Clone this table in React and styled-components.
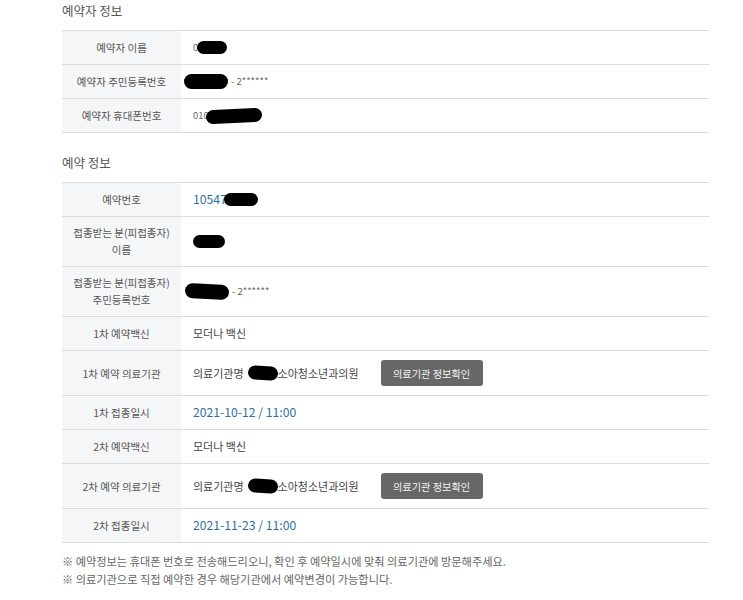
import React from "react";
import styled, { createGlobalStyle } from "styled-components";

const GlobalStyle = createGlobalStyle`
  body {
    margin: 0;
    background: #fff;
    font-family: "Noto Sans CJK KR", "Noto Sans", sans-serif;
  }
`;

const Page = styled.div`
  width: 647px;
  padding: 2px 0 0 62px;
  display: flex;
  flex-direction: column;
  gap: 21px;
`;

const Section = styled.section`
  display: flex;
  flex-direction: column;
`;

const Title = styled.h3`
  margin: 0 0 10px;
  font-size: 12.5px;
  line-height: 18px;
  font-weight: 400;
  color: #555;
`;

const Table = styled.table`
  width: 100%;
  border-collapse: collapse;
  border-top: 1px solid #dcdcdc;
`;

const Row = styled.tr`
  border-bottom: 1px solid #dcdcdc;
`;

const Label = styled.th`
  box-sizing: border-box;
  width: 119px;
  padding: ${(p) => (p.$double ? "7px 2px 8px" : "8px 2px")};
  background: #f5f6f8;
  font-size: 10.5px;
  line-height: 17px;
  font-weight: 400;
  color: #555;
  text-align: center;
  vertical-align: middle;
  white-space: nowrap;
`;

const Value = styled.td`
  padding: ${(p) => (p.$tall ? "9px" : "8px")} 12px;
  font-size: 11px;
  line-height: 17px;
  color: #444;
  vertical-align: middle;
`;

const Line = styled.div`
  display: flex;
  align-items: center;
  gap: ${(p) => p.$gap || 0}px;
`;

const Blue = styled.span`
  font-size: 12.2px;
  color: #2f6ea5;
`;

const Muted = styled.span`
  font-size: 9.5px;
  color: #666;
`;

const Redact = styled.span`
  display: inline-block;
  width: ${(p) => p.$w}px;
  height: ${(p) => p.$h || 13}px;
  margin-left: ${(p) => p.$ml || 0}px;
  margin-right: ${(p) => p.$mr || 0}px;
  background: #000;
  border-radius: 999px;
  transform: rotate(${(p) => p.$rot || 0}deg);
`;

const Button = styled.button`
  height: 26px;
  width: 102px;
  padding: 0;
  border: 0;
  border-radius: 3px;
  background: #676767;
  color: #f2f2f2;
  font-family: inherit;
  font-size: 10.2px;
`;

const Notes = styled.div`
  margin-top: -11px;
  display: flex;
  flex-direction: column;
  gap: 2px;
`;

const Note = styled.p`
  margin: 0;
  font-size: 11.2px;
  line-height: 16px;
  color: #666;
`;

const Hospital = () => (
  <Line $gap={22}>
    <Line>
      의료기관명
      <Redact $w={30} $h={14} $ml={4} $rot={4} />
      소아청소년과의원
    </Line>
    <Button>의료기관 정보확인</Button>
  </Line>
);

export default function App() {
  return (
    <>
      <GlobalStyle />
      <Page>
        <Section>
          <Title>예약자 정보</Title>
          <Table>
            <tbody>
              <Row>
                <Label>예약자 이름</Label>
                <Value>
                  <Line>
                    <Muted>0</Muted>
                    <Redact $w={30} $ml={-1} />
                  </Line>
                </Value>
              </Row>
              <Row>
                <Label>예약자 주민등록번호</Label>
                <Value>
                  <Line>
                    <Redact $w={44} $h={15} $ml={-9} $mr={3} />
                    <Muted>- 2******</Muted>
                  </Line>
                </Value>
              </Row>
              <Row>
                <Label>예약자 휴대폰번호</Label>
                <Value>
                  <Line>
                    <Muted>010</Muted>
                    <Redact $w={56} $h={14} $ml={-3} $rot={-3} />
                  </Line>
                </Value>
              </Row>
            </tbody>
          </Table>
        </Section>

        <Section>
          <Title>예약 정보</Title>
          <Table>
            <tbody>
              <Row>
                <Label>예약번호</Label>
                <Value>
                  <Line>
                    <Blue>10547</Blue>
                    <Redact $w={34} $ml={-3} />
                  </Line>
                </Value>
              </Row>
              <Row>
                <Label $double>
                  접종받는 분(피접종자)
                  <br />
                  이름
                </Label>
                <Value>
                  <Line>
                    <Redact $w={32} />
                  </Line>
                </Value>
              </Row>
              <Row>
                <Label $double>
                  접종받는 분(피접종자)
                  <br />
                  주민등록번호
                </Label>
                <Value>
                  <Line>
                    <Redact $w={44} $h={15} $ml={-8} $mr={3} $rot={3} />
                    <Muted>- 2******</Muted>
                  </Line>
                </Value>
              </Row>
              <Row>
                <Label>1차 예약백신</Label>
                <Value>모더나 백신</Value>
              </Row>
              <Row>
                <Label>1차 예약 의료기관</Label>
                <Value $tall>
                  <Hospital />
                </Value>
              </Row>
              <Row>
                <Label>1차 접종일시</Label>
                <Value>
                  <Blue>2021-10-12 / 11:00</Blue>
                </Value>
              </Row>
              <Row>
                <Label>2차 예약백신</Label>
                <Value>모더나 백신</Value>
              </Row>
              <Row>
                <Label>2차 예약 의료기관</Label>
                <Value $tall>
                  <Hospital />
                </Value>
              </Row>
              <Row>
                <Label>2차 접종일시</Label>
                <Value>
                  <Blue>2021-11-23 / 11:00</Blue>
                </Value>
              </Row>
            </tbody>
          </Table>
        </Section>

        <Notes>
          <Note>※ 예약정보는 휴대폰 번호로 전송해드리오니, 확인 후 예약일시에 맞춰 의료기관에 방문해주세요.</Note>
          <Note>※ 의료기관으로 직접 예약한 경우 해당기관에서 예약변경이 가능합니다.</Note>
        </Notes>
      </Page>
    </>
  );
}
